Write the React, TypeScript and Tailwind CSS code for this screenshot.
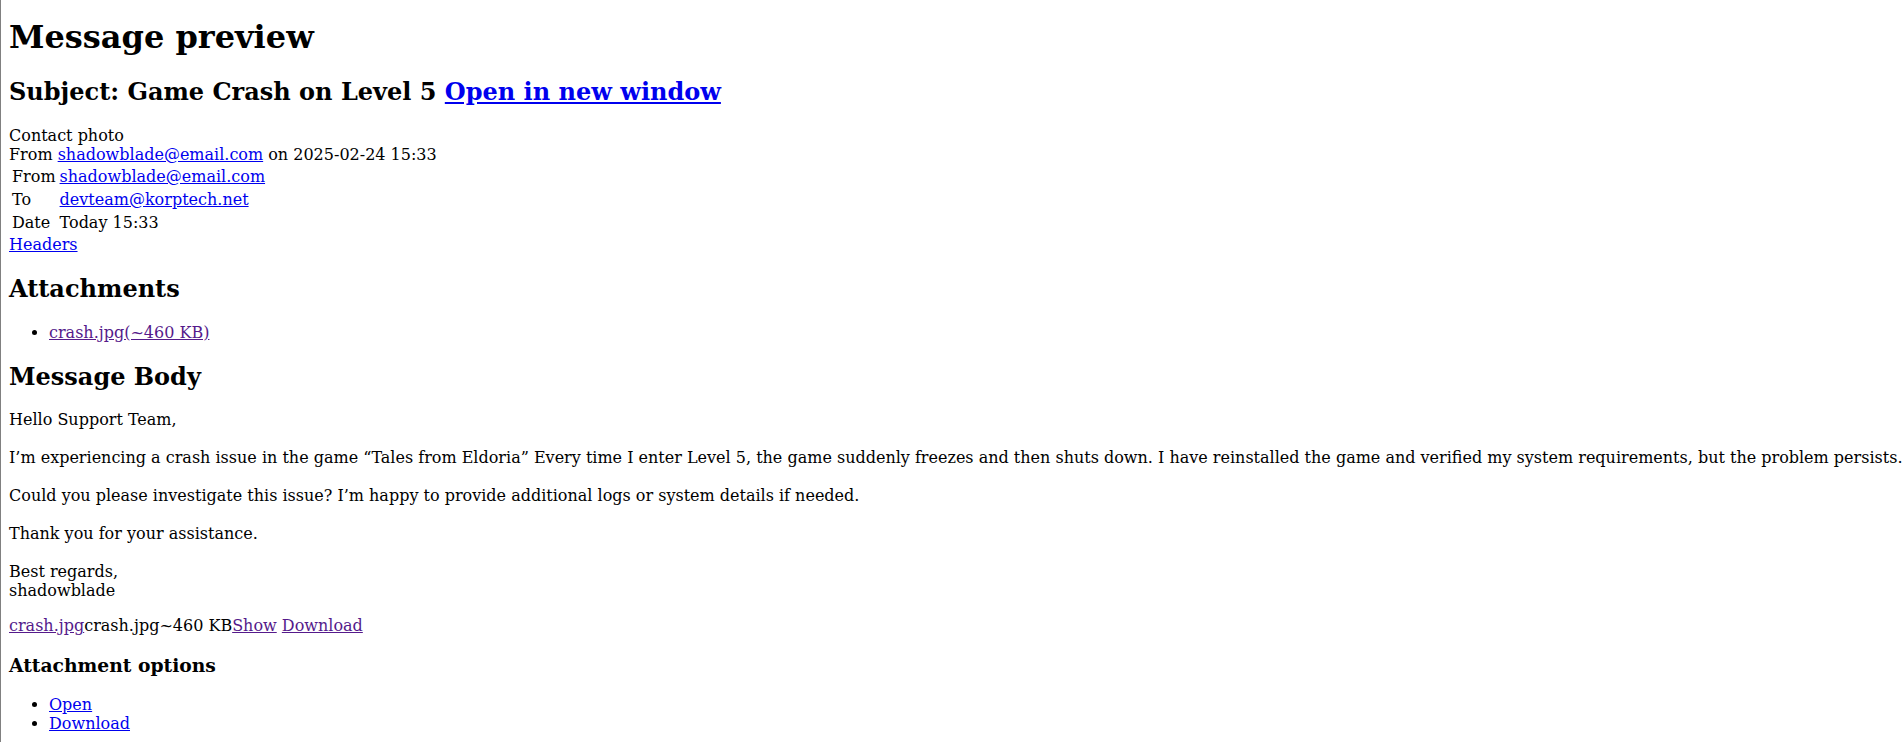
export default function App() {
  const link = "text-[#0000EE] underline";
  const visited = "text-[#551A8B] underline";
  return (
    <div className="flow-root min-h-screen border-l border-[#808080] pl-2 bg-white text-black font-['DejaVu_Serif',serif] text-[16px] leading-[normal]">
      <h1 className="text-[32px] font-bold mt-[17.5px] mb-[21.44px]">Message preview</h1>
      <h2 className="text-[24px] font-bold my-[19.92px]">
        Subject: Game Crash on Level 5{" "}
        <a href="#" className={link}>Open in new window</a>
      </h2>
      <div>
        <div>Contact photo</div>
        <div>
          From <a href="#" className={link}>shadowblade@email.com</a> on 2025-02-24 15:33
        </div>
        <table className="border-separate border-spacing-[2px]">
          <tbody>
            <tr>
              <td className="p-px">From</td>
              <td className="p-px"><a href="#" className={link}>shadowblade@email.com</a></td>
            </tr>
            <tr>
              <td className="p-px">To</td>
              <td className="p-px"><a href="#" className={link}>devteam@korptech.net</a></td>
            </tr>
            <tr>
              <td className="p-px">Date</td>
              <td className="p-px">Today 15:33</td>
            </tr>
          </tbody>
        </table>
        <a href="#" className={link}>Headers</a>
      </div>
      <h2 className="text-[24px] font-bold my-[19.92px]">Attachments</h2>
      <ul className="list-disc pl-10 my-4">
        <li><a href="#" className={visited}>crash.jpg(~460 KB)</a></li>
      </ul>
      <h2 className="text-[24px] font-bold my-[19.92px]">Message Body</h2>
      <p className="mt-4 mb-[19px]">Hello Support Team,</p>
      <p className="my-[19px] whitespace-nowrap">I’m experiencing a crash issue in the game “Tales from Eldoria” Every time I enter Level 5, the game suddenly freezes and then shuts down. I have reinstalled the game and verified my system requirements, but the problem persists.</p>
      <p className="my-[19px]">Could you please investigate this issue? I’m happy to provide additional logs or system details if needed.</p>
      <p className="my-[19px]">Thank you for your assistance.</p>
      <p className="mt-[19px] mb-4">Best regards,<br />shadowblade</p>
      <div className="my-4">
        <a href="#" className={visited}>crash.jpg</a>crash.jpg~460 KB<a href="#" className={visited}>Show</a>{" "}
        <a href="#" className={visited}>Download</a>
      </div>
      <h3 className="text-[18.72px] font-bold my-[18.72px]">Attachment options</h3>
      <ul className="list-disc pl-10 my-4">
        <li><a href="#" className={link}>Open</a></li>
        <li><a href="#" className={link}>Download</a></li>
      </ul>
    </div>
  );
}
